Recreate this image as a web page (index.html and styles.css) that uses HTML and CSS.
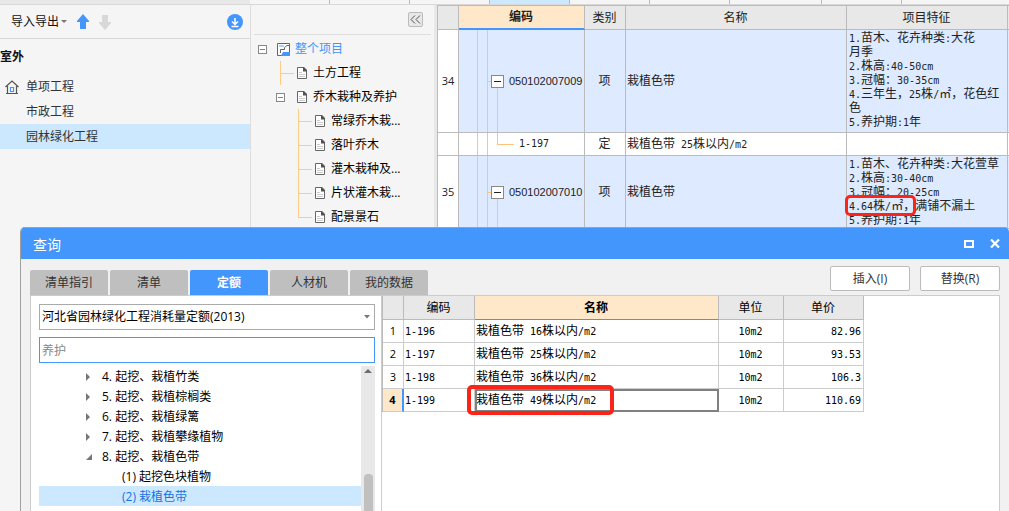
FILE: index.html
```html
<!DOCTYPE html>
<html lang="zh-CN">
<head>
<meta charset="utf-8">
<title>查询</title>
<link rel="stylesheet" href="styles.css">
</head>
<body>
<svg width="0" height="0" class="defs" aria-hidden="true">
  <symbol id="doc" viewBox="0 0 11 13">
    <path d="M.5.500h6l3 3V11.500H.5z" fill="#fff" stroke="#666"/>
    <path d="M6 0h1l3 3v1.500H6z" fill="#555"/>
    <path d="M2 5.500h3M2 7.500h6M2 9.500h6" stroke="#ccc"/>
  </symbol>
</svg>
<div class="strip">
  <div class="strip-side"></div>
  <div class="strip-tabs"><i></i><i></i><i></i><i class="on"></i><i></i><i></i><i class="wide"></i><i></i><i class="rest"></i></div>
</div>
<main class="workspace">
  <aside class="projects">
    <div class="toolbar">
      <button class="import">导入导出<svg width="6" height="3" viewBox="0 0 6 3"><path d="M0 0h6L3 3z" fill="#777"/></svg></button>
      <button class="ico" aria-label="上移"><svg width="12" height="16" viewBox="0 0 12 16"><path d="M6 0l6 7v1H9v7H3V8H0V7z" fill="#4296fc"/></svg></button>
      <button class="ico" aria-label="下移"><svg width="12" height="16" viewBox="0 0 12 16"><path d="M6 16l6-7V8H9V1H3v7H0v1z" fill="#d8d8d8"/></svg></button>
      <button class="ico download" aria-label="下载"><svg width="16" height="16" viewBox="0 0 16 16"><circle cx="8" cy="8" r="8" fill="#4296fc"/><path d="M8 4v6M5 7.500l3 3 3-3M4.500 12.500h7" fill="none" stroke="#fff" stroke-width="1.500"/></svg></button>
    </div>
    <h2>室外</h2>
    <ul class="list">
      <li><svg width="14" height="14" viewBox="0 0 14 14"><path d="M.5 7L7 1l6.500 6M2.500 6v7.500h9V6M1 13.500h12" fill="none" stroke="#555" stroke-width="1.200"/><path d="M5.500 7.500h3v4h-3z" fill="#fff" stroke="#4296fc" stroke-width="1.200"/></svg><span>单项工程</span></li>
      <li><span>市政工程</span></li>
      <li class="on"><span>园林绿化工程</span></li>
    </ul>
  </aside>
  <nav class="structure">
    <div class="collapse"><button aria-label="折叠"><svg width="11" height="9" viewBox="0 0 11 9"><path d="M5 .5l-4 4 4 4M10 .5l-4 4 4 4" fill="none" stroke="#555"/></svg></button></div>
    <ul>
      <li class="l0"><button class="tog" aria-label="收起"></button><svg class="root" width="13" height="13" viewBox="0 0 13 13"><path d="M.5.500h12v12H.5z" fill="#fff" stroke="#666"/><path d="M2 2h5v2H2z" fill="#a8d4ff"/><path d="M4 12.500l2-3.500h7v4H4z" fill="#4296fc"/><path d="M3.500 10V6.500h4V4.500L10 2.500h3" fill="none" stroke="#666"/></svg><a href="#">整个项目</a></li>
      <li class="l1"><span class="guide"></span><svg width="11" height="13"><use href="#doc"/></svg>土方工程</li>
      <li class="l1 open"><button class="tog" aria-label="收起"></button><svg width="11" height="13"><use href="#doc"/></svg>乔木栽种及养护</li>
      <li class="l2"><span class="guide"></span><svg width="11" height="13"><use href="#doc"/></svg>常绿乔木栽...</li>
      <li class="l2"><span class="guide"></span><svg width="11" height="13"><use href="#doc"/></svg>落叶乔木</li>
      <li class="l2"><span class="guide"></span><svg width="11" height="13"><use href="#doc"/></svg>灌木栽种及...</li>
      <li class="l2"><span class="guide"></span><svg width="11" height="13"><use href="#doc"/></svg>片状灌木栽...</li>
      <li class="l2"><span class="guide last"></span><svg width="11" height="13"><use href="#doc"/></svg>配景景石</li>
    </ul>
  </nav>
  <section class="bill">
    <table>
      <colgroup><col class="c-no"><col class="c-code"><col class="c-kind"><col><col class="c-feat"><col class="c-end"></colgroup>
      <thead><tr><th></th><th class="sort">编码</th><th>类别</th><th>名称</th><th>项目特征</th><th></th></tr></thead>
      <tbody>
        <tr class="item"><td class="no">34</td><td class="code parent"><div><button class="box" aria-label="收起"></button>050102007009</div></td><td class="mid">项</td><td>栽植色带</td>
          <td class="feat"><p><b>1.</b>苗木、花卉种类<b>:</b>大花<br>月季</p><p><b>2.</b>株高<b>:40-50cm</b></p><p><b>3.</b>冠幅：<b>30-35cm</b></p><p><b>4.</b>三年生，<b>25</b>株<b>/</b>㎡，花色红<br>色</p><p><b>5.</b>养护期<b>:1</b>年</p></td><td></td></tr>
        <tr class="sub"><td></td><td class="code child"><div><b>1-197</b></div></td><td class="mid">定</td><td>栽植色带<b> 25</b>株以内<b>/m2</b></td><td></td><td></td></tr>
        <tr class="item"><td class="no">35</td><td class="code parent"><div><button class="box" aria-label="收起"></button>050102007010</div></td><td class="mid">项</td><td>栽植色带</td>
          <td class="feat"><p><b>1.</b>苗木、花卉种类<b>:</b>大花萱草</p><p><b>2.</b>株高<b>:30-40cm</b></p><p><b>3.</b>冠幅：<b>20-25cm</b></p><p class="marked"><b>4.64</b>株<b>/</b>㎡，满铺不漏土<i class="mark mark-feat"></i></p><p><b>5.</b>养护期<b>:1</b>年</p></td><td></td></tr>
      </tbody>
    </table>
  </section>
</main>

<section class="dialog" role="dialog" aria-labelledby="dlg-title">
  <header>
    <h1 id="dlg-title">查询</h1>
    <button aria-label="最大化"><svg width="10" height="8" viewBox="0 0 10 8"><path d="M1 1h8v6H1z" fill="none" stroke="#fff" stroke-width="2"/></svg></button>
    <button aria-label="关闭"><svg width="10" height="9" viewBox="0 0 10 9"><path d="M1 .5l8 8M9 .5l-8 8" stroke="#fff" stroke-width="2.200"/></svg></button>
  </header>
  <div class="actions">
    <div class="tabs"><button>清单指引</button><button>清单</button><button class="on">定额</button><button>人材机</button><button>我的数据</button></div>
    <div class="buttons"><button>插入(I)</button><button>替换(R)</button></div>
  </div>
  <div class="body">
    <div class="side">
      <div class="combo"><select aria-label="定额库"><option>河北省园林绿化工程消耗量定额(2013)</option></select><svg width="6" height="4" viewBox="0 0 6 4"><path d="M0 0h6L3 3.500z" fill="#777"/></svg></div>
      <input type="text" placeholder="养护" aria-label="搜索">
      <div class="catalog">
        <ul>
          <li><svg width="8" height="8" viewBox="0 0 8 8"><path d="M1 0l4 4-4 4z" fill="#777"/></svg>4. 起挖、栽植竹类</li>
          <li><svg width="8" height="8" viewBox="0 0 8 8"><path d="M1 0l4 4-4 4z" fill="#777"/></svg>5. 起挖、栽植棕榈类</li>
          <li><svg width="8" height="8" viewBox="0 0 8 8"><path d="M1 0l4 4-4 4z" fill="#777"/></svg>6. 起挖、栽植绿篱</li>
          <li><svg width="8" height="8" viewBox="0 0 8 8"><path d="M1 0l4 4-4 4z" fill="#777"/></svg>7. 起挖、栽植攀缘植物</li>
          <li><svg width="8" height="8" viewBox="0 0 8 8"><path d="M7 1v6H1z" fill="#777"/></svg>8. 起挖、栽植色带</li>
          <li class="leaf">(1) 起挖色块植物</li>
          <li class="leaf on">(2) 栽植色带</li>
          <li class="leaf">(3)</li>
        </ul>
        <div class="scroll"><svg width="8" height="4" viewBox="0 0 8 4"><path d="M0 4h8L4 0z" fill="#6b6b78"/></svg><span></span></div>
      </div>
    </div>
    <div class="result">
      <table>
        <colgroup><col class="r-no"><col class="r-code"><col class="r-name"><col class="r-unit"><col class="r-price"></colgroup>
        <thead><tr><th></th><th>编码</th><th class="sort">名称</th><th>单位</th><th>单价</th></tr></thead>
        <tbody>
          <tr><td class="no">1</td><td><b>1-196</b></td><td>栽植色带<b> 16</b>株以内<b>/m2</b></td><td class="mid"><b>10m2</b></td><td class="num"><b>82.96</b></td></tr>
          <tr><td class="no">2</td><td><b>1-197</b></td><td>栽植色带<b> 25</b>株以内<b>/m2</b></td><td class="mid"><b>10m2</b></td><td class="num"><b>93.53</b></td></tr>
          <tr><td class="no">3</td><td><b>1-198</b></td><td>栽植色带<b> 36</b>株以内<b>/m2</b></td><td class="mid"><b>10m2</b></td><td class="num"><b>106.3</b></td></tr>
          <tr class="current"><td class="no">4</td><td><b>1-199</b></td><td class="focus">栽植色带<b> 49</b>株以内<b>/m2</b><i class="mark mark-name"></i></td><td class="mid"><b>10m2</b></td><td class="num"><b>110.69</b></td></tr>
        </tbody>
      </table>
    </div>
  </div>
</section>
</body>
</html>
```
FILE: styles.css
```css
* { box-sizing: border-box; }
body {
  margin: 0;
  height: 100vh;
  overflow: hidden;
  display: flex;
  flex-direction: column;
  position: relative;
  background: #f5f5f5;
  color: #111;
  font: 12px/20px "Open Sans", "Noto Sans CJK SC", sans-serif;
}
ul, p, h1, h2 { margin: 0; padding: 0; list-style: none; }
button { font: inherit; color: inherit; background: none; border: 0; padding: 0; }
svg { flex: none; display: block; }
.defs { position: absolute; }

.strip { display: flex; height: 5px; flex: none; border-bottom: 1px solid #d8d8d8; }
.strip-side { width: 250px; background: #e8e8e8; }
.strip-tabs { flex: 1; display: flex; overflow: hidden; }
.strip-tabs i { width: 80px; flex: none; border-right: 1px solid #bbb; }
.strip-tabs .wide { width: 92px; }
.strip-tabs .rest { flex: 1; border: 0; }
.strip-tabs .on { background: #cce8ff; }

.workspace { flex: 1; min-height: 0; display: flex; }
.projects { width: 251px; flex: none; border-right: 1px solid #ddd; }
.toolbar {
  height: 34px;
  display: flex;
  align-items: center;
  gap: 10px;
  padding: 0 7px 0 11px;
  border-bottom: 1px solid #d8d8d8;
}
.import { display: flex; align-items: center; gap: 2px; }
.download { margin-left: auto; }
h2 { font-size: 12px; line-height: 35px; }
.list li {
  height: 25px;
  display: flex;
  align-items: center;
  padding-left: 5px;
  color: #333;
}
.list span { margin-left: auto; width: 224px; }
.list svg { margin-right: -14px; }
.list .on { background: #cce8ff; }

.structure { width: 186px; flex: none; border-right: 3px solid #e8e8e8; }
.collapse {
  height: 30px;
  margin: 0 3px;
  padding: 7px 8px 0;
  text-align: right;
  border-bottom: 1px solid #ddd;
}
.collapse button {
  width: 15px;
  height: 15px;
  display: inline-flex;
  align-items: center;
  justify-content: center;
  background: #e8e8e8;
  border: 1px solid #bbb;
  border-radius: 2px;
  vertical-align: top;
}
.structure ul { padding-top: 2px; }
.structure li { height: 24px; display: flex; align-items: center; white-space: nowrap; color: #000; }
.structure li svg { margin-right: 5px; }
.structure a { color: #4296fc; text-decoration: none; }
.l0 { padding-left: 7px; }
.l0 .tog { margin-right: 10px; }
.l1 { padding-left: 29px; }
.l1.open { padding-left: 25px; }
.l1 .tog { margin-right: 12px; }
.l2 { padding-left: 47px; }
.tog {
  width: 9px;
  height: 9px;
  border: 1px solid #888;
  background: linear-gradient(#2a9fd0 0 0) center / 5px 1px no-repeat #fff;
}
.guide {
  align-self: stretch;
  width: 14px;
  margin-right: 3px;
  background:
    linear-gradient(#fc8 0 0) 0 0 / 1px 100% no-repeat,
    linear-gradient(#fc8 0 0) 0 50% / 100% 1px no-repeat;
}
.guide.last { background-size: 1px 50%, 100% 1px; }

table { border-collapse: separate; border-spacing: 0; table-layout: fixed; color: #222; }
th, td { border-right: 1px solid #bbb; border-bottom: 1px solid #bbb; padding: 0 2px 0 1px; text-align: left; line-height: 14px; white-space: nowrap; }
th { background: #e8e8e8; text-align: center; font-weight: 400; }
th.sort { background: #ffe7c9; font-weight: 700; }
td b { font: 10px/10px "DejaVu Sans Mono", monospace; white-space: pre; }
td.mid { text-align: center; }
td.no { text-align: center; font-size: 11px; padding: 0; }

.bill { flex: 1; min-width: 0; background: #fff; }
.bill table { width: 100%; border-top: 1px solid #bbb; border-left: 1px solid #bbb; }
.c-no { width: 21px; }
.c-code { width: 126px; }
.c-kind { width: 41px; }
.c-feat { width: 161px; }
.c-end { width: 1px; }
.bill th { height: 24px; }
.bill th:last-child, .bill td:last-child { border-right: 0; padding: 0; }
.bill th.sort { border-bottom: 2px solid #4296fc; }
.item td { background-color: #deeaff; }
.item td.no { background-color: #fff; }
.sub td { height: 23px; }
td.feat { padding: 1px 0 3px 2px; vertical-align: top; }
.feat p { line-height: 14px; }
.item:last-child .feat { padding-bottom: 1px; }
td.code {
  padding: 0;
  background-repeat: no-repeat;
  background-image: linear-gradient(#ffc47a 0 0), linear-gradient(#ffc47a 0 0), linear-gradient(#ffc47a 0 0), linear-gradient(#ffc47a 0 0);
}
td.parent {
  background-position: 18px 0, 28px 0, 38px 100%, 28px 50%;
  background-size: 1px 100%, 1px 100%, 1px 50%, 6px 1px;
  font: 11px/14px "Liberation Sans", sans-serif;
}
td.child {
  background-position: 18px 0, 28px 0, 38px 0, 38px 50%;
  background-size: 1px 100%, 1px 100%, 1px 50%, 17px 1px;
}
.code div { display: flex; align-items: center; gap: 5px; }
.parent div { padding-left: 32px; }
.child div { padding-left: 60px; }
.box {
  width: 13px;
  height: 13px;
  border: 1px solid #888;
  background: linear-gradient(#222 0 0) center / 7px 1px no-repeat #fff;
}
.marked { position: relative; }
.mark { position: absolute; z-index: 2; border: 3px solid #fc2418; border-radius: 5px; pointer-events: none; }
.mark-feat { left: -4px; top: -4px; width: 71px; height: 21px; }

.dialog {
  position: absolute;
  inset: 227px 0 0 20px;
  display: flex;
  flex-direction: column;
  background: #f1f1f1;
  border-left: 1px solid #a0a0a0;
  border-radius: 5px 5px 0 0;
  overflow: hidden;
}
.dialog header {
  height: 32px;
  flex: none;
  display: flex;
  align-items: center;
  gap: 16px;
  padding: 0 9px 0 12px;
  color: #fff;
  background: #4296fc;
  border-top: 1px solid #8aa4c4;
}
.dialog h1 { flex: 1; font-size: 14px; line-height: 20px; font-weight: 400; padding-top: 3px; }
.actions {
  flex: none;
  display: flex;
  justify-content: space-between;
  padding: 7px 9px 0;
}
.tabs { display: flex; gap: 2px; padding-top: 4px; }
.tabs button { width: 78px; height: 25px; background: #bfbfbf; color: #333; border-radius: 2px 2px 0 0; }
.tabs .on { background: #4296fc; color: #fff; font-weight: 700; }
.buttons { display: flex; gap: 10px; }
.buttons button { width: 80px; height: 25px; background: #fff; border: 1px solid #bbb; border-radius: 2px; color: #333; }
.body {
  flex: 1;
  min-height: 0;
  margin: 0 9px;
  display: flex;
  background: #fff;
  border: 1px solid #ccc;
  border-bottom: 0;
}
.side { width: 351px; flex: none; display: flex; flex-direction: column; padding: 8px 6px 0 8px; border-right: 1px solid #ccc; }
.combo { display: grid; align-items: center; }
.combo > * { grid-area: 1 / 1; }
.combo svg { justify-self: end; margin-right: 5px; }
select, input {
  width: 100%;
  height: 26px;
  padding: 0 2px;
  border: 1px solid #aaa;
  border-radius: 0;
  background: #fff;
  color: #000;
  font: inherit;
  appearance: none;
}
input { flex: none; margin-top: 7px; border-color: #4296fc; }
input::placeholder { color: #888; }
.catalog { flex: 1; min-height: 0; display: flex; overflow: hidden; padding-top: 3px; color: #000; }
.catalog ul { flex: 1; }
.catalog li {
  height: 20px;
  display: flex;
  align-items: center;
  gap: 9px;
  padding: 2px 0 0 46px;
}
.catalog .leaf { padding-left: 83px; }
.catalog .on { background: #cce8ff; color: #1673e0; }
.scroll {
  width: 14px;
  display: flex;
  flex-direction: column;
  justify-content: space-between;
  align-items: center;
  padding-top: 3px;
  background: #e8e8e8;
}
.scroll span { width: 9px; height: 37px; background: #c0c0c0; border-radius: 4px 4px 0 0; }

.result table { width: 482px; border-left: 1px solid #bbb; color: #000; }
.r-no { width: 21px; }
.r-code { width: 71px; }
.r-name { width: 244px; }
.r-unit { width: 65px; }
.r-price { width: 80px; }
.result th { height: 24px; }
.result th.sort { border-bottom-color: #4296fc; }
.result td { height: 23px; border-color: #ccc; }
.result td.num { text-align: right; }
.current .no { background: #ffe7c9; font-weight: 700; border-right: 2px solid #4296fc; }
td.focus { position: relative; outline: 2px solid #808080; outline-offset: -2px; }
.mark-name { left: -8px; top: -4px; width: 147px; height: 30px; border-width: 4px; }
```
